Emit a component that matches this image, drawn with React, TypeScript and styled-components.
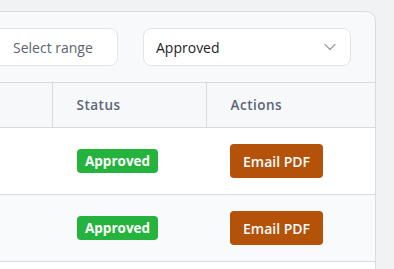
import React from "react";
import styled, { createGlobalStyle } from "styled-components";

const Global = createGlobalStyle`
  html, body { margin: 0; padding: 0; background: #f1f2f4; overflow: hidden; }
  body { font-family: "Open Sans", "Noto Sans", sans-serif; }
  * { box-sizing: border-box; }
`;

const Page = styled.div`
  padding: 11px 18px 0 0;
  width: 394px;
  height: 269px;
  overflow: hidden;
`;

const Card = styled.div`
  margin-left: -120px;
  background: #f8f9fb;
  border: 1px solid #d8dce2;
  border-radius: 10px;
  overflow: hidden;
`;

const Toolbar = styled.div`
  display: flex;
  justify-content: flex-end;
  align-items: center;
  gap: 25px;
  padding: 16px 24px 16px 24px;
`;

const Field = styled.div<{ $w: number; $pl: number }>`
  width: ${(p) => p.$w}px;
  height: 38px;
  background: #ffffff;
  border: 1px solid #e2e5ea;
  border-radius: 8px;
  display: flex;
  align-items: center;
  justify-content: space-between;
  padding: 0 14px 0 ${(p) => p.$pl}px;
  font-size: 14px;
`;

const Placeholder = styled.span`
  color: #5c6470;
`;

const Value = styled.span`
  color: #1f2328;
`;

const Table = styled.table`
  width: 100%;
  border-collapse: collapse;
  table-layout: fixed;
`;

const HeadCell = styled.th<{ $first?: boolean }>`
  height: 45px;
  text-align: left;
  padding: 0 0 0 24px;
  font-size: 13.5px;
  font-weight: 600;
  letter-spacing: 0.5px;
  color: #5b6577;
  background: #f7f8fa;
  border-top: 1px solid #d8dce2;
  border-bottom: 1px solid #d8dce2;
  border-left: ${(p) => (p.$first ? "none" : "1px solid #d8dce2")};
`;

const Row = styled.tr<{ $alt?: boolean }>`
  background: ${(p) => (p.$alt ? "#f8fafc" : "#ffffff")};
  border-bottom: 1px solid #d8dce2;
`;

const Cell = styled.td`
  height: 67px;
  padding: 0 0 0 24px;
  vertical-align: middle;
`;

const Badge = styled.span`
  display: inline-flex;
  align-items: center;
  height: 24px;
  padding: 0 8px;
  margin-left: 1px;
  border-radius: 4px;
  background: #24b33c;
  color: #ffffff;
  font-size: 13.5px;
  font-weight: 700;
`;

const Button = styled.button`
  height: 34px;
  padding: 0 13px;
  border: none;
  border-radius: 4px;
  background: #b4520a;
  color: #ffffff;
  font-family: inherit;
  font-size: 14px;
  font-weight: 600;
  cursor: pointer;
`;

const Chevron = () => (
  <svg width="12" height="8" viewBox="0 0 12 8" fill="none">
    <path d="M1 1.5l5 5 5-5" stroke="#9aa0a8" strokeWidth="1.3" strokeLinecap="round" strokeLinejoin="round" />
  </svg>
);

const rows = [{ id: 1, filled: true }, { id: 2, filled: true }, { id: 3, filled: false }];

export default function App() {
  return (
    <>
      <Global />
      <Page>
        <Card>
          <Toolbar>
            <Field $w={130} $pl={24}>
              <Placeholder>Select range</Placeholder>
            </Field>
            <Field $w={208} $pl={12}>
              <Value>Approved</Value>
              <Chevron />
            </Field>
          </Toolbar>
          <Table>
            <colgroup>
              <col style={{ width: 171 }} />
              <col style={{ width: 154 }} />
              <col />
            </colgroup>
            <thead>
              <tr>
                <HeadCell $first />
                <HeadCell>Status</HeadCell>
                <HeadCell>Actions</HeadCell>
              </tr>
            </thead>
            <tbody>
              {rows.map((r, i) => (
                <Row key={r.id} $alt={i % 2 === 1}>
                  <Cell />
                  <Cell>{r.filled && <Badge>Approved</Badge>}</Cell>
                  <Cell>{r.filled && <Button>Email PDF</Button>}</Cell>
                </Row>
              ))}
            </tbody>
          </Table>
        </Card>
      </Page>
    </>
  );
}
